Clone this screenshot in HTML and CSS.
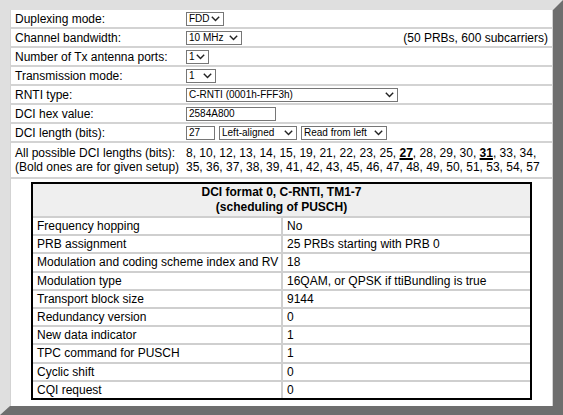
FILE: index.html
```html
<!DOCTYPE html>
<html>
<head>
<meta charset="utf-8">
<link rel="stylesheet" href="styles.css">
</head>
<body>
<div class="frame">
  <div class="row">
    <div class="lbl">Duplexing mode:</div>
    <div class="val"><span class="sel w-fdd"><span>FDD</span><svg class="chev" viewBox="0 0 9 6"><path d="M0.8 0.8 L4.5 4.6 L8.2 0.8"/></svg></span></div>
  </div>
  <div class="row">
    <div class="lbl">Channel bandwidth:</div>
    <div class="val split"><span class="sel w-bw"><span>10 MHz</span><svg class="chev" viewBox="0 0 9 6"><path d="M0.8 0.8 L4.5 4.6 L8.2 0.8"/></svg></span><span class="note">(50 PRBs, 600 subcarriers)</span></div>
  </div>
  <div class="row">
    <div class="lbl">Number of Tx antenna ports:</div>
    <div class="val"><span class="sel w-ant"><span>1</span><svg class="chev" viewBox="0 0 9 6"><path d="M0.8 0.8 L4.5 4.6 L8.2 0.8"/></svg></span></div>
  </div>
  <div class="row">
    <div class="lbl">Transmission mode:</div>
    <div class="val"><span class="sel w-tm"><span>1</span><svg class="chev" viewBox="0 0 9 6"><path d="M0.8 0.8 L4.5 4.6 L8.2 0.8"/></svg></span></div>
  </div>
  <div class="row">
    <div class="lbl">RNTI type:</div>
    <div class="val"><span class="sel w-rnti"><span>C-RNTI (0001h-FFF3h)</span><svg class="chev" viewBox="0 0 9 6"><path d="M0.8 0.8 L4.5 4.6 L8.2 0.8"/></svg></span></div>
  </div>
  <div class="row">
    <div class="lbl">DCI hex value:</div>
    <div class="val"><span class="inp w-hex">2584A800</span></div>
  </div>
  <div class="row">
    <div class="lbl">DCI length (bits):</div>
    <div class="val controls"><span class="inp w-len">27</span><span class="sel w-align"><span>Left-aligned</span><svg class="chev" viewBox="0 0 9 6"><path d="M0.8 0.8 L4.5 4.6 L8.2 0.8"/></svg></span><span class="sel w-read"><span>Read from left</span><svg class="chev" viewBox="0 0 9 6"><path d="M0.8 0.8 L4.5 4.6 L8.2 0.8"/></svg></span></div>
  </div>
  <div class="row tall">
    <div class="lbl">All possible DCI lengths (bits):<br>(Bold ones are for given setup)</div>
    <div class="val">8, 10, 12, 13, 14, 15, 19, 21, 22, 23, 25, <b class="hit">27</b>, 28, 29, 30, <b class="hit">31</b>, 33, 34,<br>35, 36, 37, 38, 39, 41, 42, 43, 45, 46, 47, 48, 49, 50, 51, 53, 54, 57</div>
  </div>
  <div class="row result">
    <div class="dci">
      <div class="head">DCI format 0, C-RNTI, TM1-7<br>(scheduling of PUSCH)</div>
      <div class="cell">Frequency hopping</div><div class="cell">No</div>
      <div class="cell">PRB assignment</div><div class="cell">25 PRBs starting with PRB 0</div>
      <div class="cell">Modulation and coding scheme index and RV</div><div class="cell">18</div>
      <div class="cell">Modulation type</div><div class="cell">16QAM, or QPSK if ttiBundling is true</div>
      <div class="cell">Transport block size</div><div class="cell">9144</div>
      <div class="cell">Redundancy version</div><div class="cell">0</div>
      <div class="cell">New data indicator</div><div class="cell">1</div>
      <div class="cell">TPC command for PUSCH</div><div class="cell">1</div>
      <div class="cell">Cyclic shift</div><div class="cell">0</div>
      <div class="cell">CQI request</div><div class="cell">0</div>
    </div>
  </div>
</div>
</body>
</html>
```

FILE: styles.css
```css
html, body {
  margin: 0;
  padding: 0;
  background: #ffffff;
}

body {
  font-family: "Liberation Sans", Arial, sans-serif;
  font-size: 12px;
  color: #000;
}

.frame {
  width: 563px;
  height: 415px;
  box-sizing: border-box;
  border-style: solid;
  border-width: 10px 10px 9px 10px;
  border-color: #dfdfdf #6e6e6e #6e6e6e #dfdfdf;
  background: #d3d3d3;
  padding: 0 1px;
  display: flex;
  flex-direction: column;
  gap: 2px;
}

.row {
  display: grid;
  grid-template-columns: 172px 1fr;
  height: 17px;
  background: #fff;
  align-items: center;
  line-height: 14px;
  white-space: nowrap;
}

.row.tall {
  height: 34px;
}

.lbl {
  padding-left: 4px;
}

.val {
  padding-left: 3px;
  display: flex;
  align-items: center;
}

.row.tall .val {
  display: block;
}

.val.split {
  justify-content: space-between;
  padding-right: 4px;
}

.val.controls {
  gap: 4px;
}

.hit {
  text-decoration: underline;
  text-decoration-thickness: 2px;
}

.sel, .inp {
  display: inline-flex;
  align-items: center;
  box-sizing: border-box;
  height: 14px;
  border: 1px solid #767676;
  background: #fff;
  font-size: 10px;
  line-height: 12px;
  padding: 0 3px 0 2px;
  overflow: hidden;
}

.sel {
  justify-content: space-between;
}

.chev {
  width: 9px;
  height: 6px;
  flex: none;
}

.chev path {
  fill: none;
  stroke: #222;
  stroke-width: 1.4;
}

.w-fdd { width: 38px; }
.w-bw { width: 56px; }
.w-ant { width: 23px; }
.w-tm { width: 30px; }
.w-rnti { width: 212px; }
.w-hex { width: 90px; }
.w-len { width: 29px; }
.w-align { width: 78px; }
.w-read { width: 86px; }

.row.result {
  flex: 1;
  height: auto;
  display: flex;
  justify-content: center;
  align-items: flex-start;
  padding: 3px 0 6px;
}

.dci {
  width: 501px;
  height: 218px;
  box-sizing: border-box;
  border: 2px solid #000;
  background: #cfcfcf;
  display: grid;
  grid-template-columns: 248px 1fr;
  grid-template-rows: 32px repeat(10, 1fr);
  gap: 2px;
}

.head {
  grid-column: 1 / 3;
  background: #efefef;
  font-weight: bold;
  text-align: center;
  line-height: 15px;
  display: flex;
  align-items: center;
  justify-content: center;
}

.cell {
  background: #fff;
  padding: 0 4px;
  display: flex;
  align-items: center;
}
```
